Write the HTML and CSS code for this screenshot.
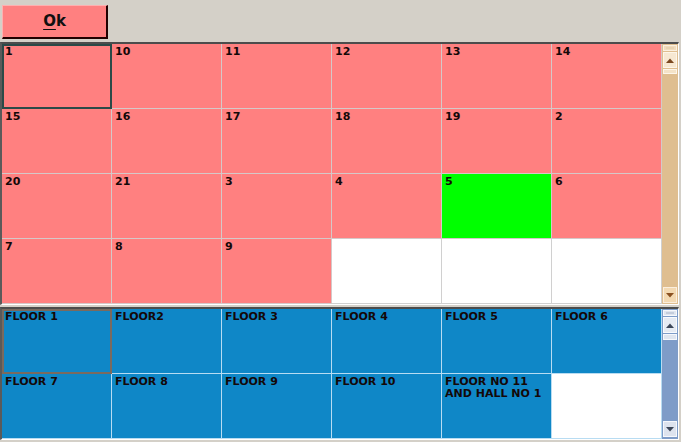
FILE: index.html
```html
<!DOCTYPE html>
<html>
<head>
<meta charset="utf-8">
<link rel="stylesheet" href="styles.css">
</head>
<body>
<div class="toolbar">
  <div class="ok-btn"><u>O</u>k</div>
</div>
<div class="panel tables">
  <div class="grid">
    <div class="cell red sel">1</div>
    <div class="cell red">10</div>
    <div class="cell red">11</div>
    <div class="cell red">12</div>
    <div class="cell red">13</div>
    <div class="cell red">14</div>
    <div class="cell red">15</div>
    <div class="cell red">16</div>
    <div class="cell red">17</div>
    <div class="cell red">18</div>
    <div class="cell red">19</div>
    <div class="cell red">2</div>
    <div class="cell red">20</div>
    <div class="cell red">21</div>
    <div class="cell red">3</div>
    <div class="cell red">4</div>
    <div class="cell green">5</div>
    <div class="cell red">6</div>
    <div class="cell red">7</div>
    <div class="cell red">8</div>
    <div class="cell red">9</div>
    <div class="cell empty"></div>
    <div class="cell empty"></div>
    <div class="cell empty"></div>
  </div>
  <div class="scroll">
    <svg width="16" height="260" viewBox="0 0 16 260">
      <rect x="0" y="0" width="16" height="260" fill="#dfbe90"/>
      <rect x="1.5" y="1.5" width="13" height="5" fill="#f1dcbd" stroke="#fbf0e0"/>
      <line x1="4" y1="4" x2="12" y2="4" stroke="#e0c9a6"/>
      <rect x="1.5" y="8.5" width="13" height="15" fill="#f7e8d2" stroke="#fdf6ea"/>
      <polygon points="4,19 8,14.5 12,19" fill="#7a4820"/>
      <rect x="1.5" y="25.5" width="13" height="4" fill="#f4e3c8" stroke="#fdf6ea"/>
      <rect x="1.5" y="243.5" width="13" height="15" fill="#f3d9b2" stroke="#fbeedd"/>
      <polygon points="4,249 12,249 8,253.5" fill="#8a5020"/>
    </svg>
  </div>
</div>
<div class="panel floors">
  <div class="grid">
    <div class="cell blue sel2">FLOOR 1</div>
    <div class="cell blue">FLOOR2</div>
    <div class="cell blue">FLOOR 3</div>
    <div class="cell blue">FLOOR 4</div>
    <div class="cell blue">FLOOR 5</div>
    <div class="cell blue">FLOOR 6</div>
    <div class="cell blue">FLOOR 7</div>
    <div class="cell blue">FLOOR 8</div>
    <div class="cell blue">FLOOR 9</div>
    <div class="cell blue">FLOOR 10</div>
    <div class="cell blue">FLOOR NO 11 AND HALL NO 1</div>
    <div class="cell empty"></div>
  </div>
  <div class="scroll">
    <svg width="16" height="130" viewBox="0 0 16 130">
      <rect x="0" y="0" width="16" height="130" fill="#7e9cc8"/>
      <rect x="1.5" y="1.5" width="13" height="5" fill="#dfe5ef" stroke="#f6f8fc"/>
      <line x1="4" y1="4" x2="12" y2="4" stroke="#a8b4c8"/>
      <rect x="1.5" y="8.5" width="13" height="15" fill="#e6ebf3" stroke="#f8fafd"/>
      <polygon points="4,19 8,14.5 12,19" fill="#3c4658"/>
      <rect x="1.5" y="25.5" width="13" height="5" fill="#dfe5ef" stroke="#f6f8fc"/>
      <rect x="1.5" y="112.5" width="13" height="15" fill="#dde3ee" stroke="#f6f8fc"/>
      <polygon points="4,118 12,118 8,122.5" fill="#3c4658"/>
    </svg>
  </div>
</div>
</body>
</html>
```

FILE: styles.css
```css
html, body {
  margin: 0;
  padding: 0;
}
body {
  background: #d4d0c8;
  width: 681px;
  height: 442px;
  overflow: hidden;
  font-family: "DejaVu Sans", Verdana, sans-serif;
}
.toolbar {
  height: 42px;
  box-sizing: border-box;
  padding: 5px 0 0 2px;
}
.ok-btn {
  width: 106px;
  height: 34px;
  box-sizing: border-box;
  background: #ff8080;
  border-top: 1px solid #ffb0b0;
  border-left: 1px solid #ffb0b0;
  border-right: 2px solid #200000;
  border-bottom: 2px solid #200000;
  font-weight: bold;
  font-size: 15px;
  color: #101010;
  display: flex;
  align-items: center;
  justify-content: center;
  padding-bottom: 1px;
}
.ok-btn u {
  text-underline-offset: 3px;
}
.panel {
  display: flex;
  width: 679px;
  box-sizing: border-box;
  border-top: 2px solid #4c4c4c;
  border-left: 2px solid #5a5a5a;
  border-right: 1px solid #ffffff;
  border-bottom: 1px solid #ffffff;
}
.floors {
  margin-top: 2px;
}
.grid {
  display: grid;
  grid-template-columns: repeat(6, 110px);
  grid-auto-rows: 65px;
  width: 660px;
}
.cell {
  box-sizing: border-box;
  padding: 2px 3px 0 3px;
  font-weight: bold;
  font-size: 11px;
  line-height: 12px;
  color: #140808;
}
.tables .cell {
  border-right: 1px solid #d6c8c8;
  border-bottom: 1px solid #d6c8c8;
}
.floors .cell {
  border-right: 1px solid #b8dcf2;
  border-bottom: 1px solid #b8dcf2;
}
.red { background: #ff8080; }
.green { background: #00ff00; }
.blue { background: #0f87c7; }
.empty { background: #ffffff; }
.tables .empty {
  border-color: #d0d0d0;
}
.sel {
  outline: 2px solid #2b4a48;
  outline-offset: -2px;
}
.sel2 {
  outline: 2px solid #7a6a5e;
  outline-offset: -2px;
}
.scroll {
  width: 16px;
  display: flex;
}
.scroll svg {
  display: block;
}
```
